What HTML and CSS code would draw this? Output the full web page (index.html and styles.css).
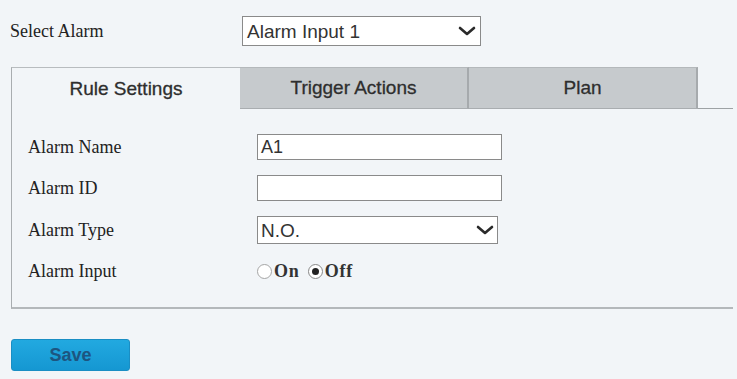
FILE: index.html
```html
<!DOCTYPE html>
<html>
<head>
<meta charset="utf-8">
<link rel="stylesheet" href="styles.css">
</head>
<body>
<div class="page">
  <div class="top-row">
    <span class="label top-label">Select Alarm</span>
    <div class="select select-top">
      <span class="select-text">Alarm Input 1</span>
      <svg class="chev" width="18" height="10" viewBox="0 0 18 10"><path d="M2 2 L9 8 L16 2" fill="none" stroke="#2a2a2a" stroke-width="2.6" stroke-linecap="round" stroke-linejoin="round"/></svg>
    </div>
  </div>

  <div class="panel">
    <div class="tabs">
      <div class="tab active">Rule Settings</div>
      <div class="tab">Trigger Actions</div>
      <div class="tab">Plan</div>
      <div class="tab-fill"></div>
    </div>
    <div class="panel-body">
      <div class="row">
        <span class="label">Alarm Name</span>
        <div class="input">A1</div>
      </div>
      <div class="row">
        <span class="label">Alarm ID</span>
        <div class="input"></div>
      </div>
      <div class="row">
        <span class="label">Alarm Type</span>
        <div class="select select-type">
          <span class="select-text">N.O.</span>
          <svg class="chev" width="18" height="10" viewBox="0 0 18 10"><path d="M2 2 L9 8 L16 2" fill="none" stroke="#2a2a2a" stroke-width="2.6" stroke-linecap="round" stroke-linejoin="round"/></svg>
        </div>
      </div>
      <div class="row">
        <span class="label">Alarm Input</span>
        <div class="radios">
          <span class="radio"></span><span class="radio-label">On</span>
          <span class="radio checked"><span class="dot"></span></span><span class="radio-label">Off</span>
        </div>
      </div>
    </div>
  </div>

  <div class="actions">
    <button class="save">Save</button>
  </div>
</div>
</body>
</html>
```

FILE: styles.css
```css
html, body {
  margin: 0;
  padding: 0;
  background: #f2f5f8;
}
.page {
  width: 737px;
  height: 379px;
  overflow: hidden;
  padding-top: 16px;
  box-sizing: border-box;
}
.label {
  font-family: "Liberation Serif", "Times New Roman", serif;
  font-size: 18px;
  color: #222;
}
.top-row {
  display: flex;
  align-items: center;
  height: 30px;
  padding-left: 10px;
}
.top-label {
  width: 232px;
}
.select {
  display: flex;
  align-items: center;
  justify-content: space-between;
  background: #fff;
  border: 1px solid #8a8a8a;
  box-sizing: border-box;
  font-family: "Liberation Sans", Arial, sans-serif;
  font-size: 19px;
  color: #333;
}
.select-top {
  width: 239px;
  height: 30px;
  padding: 0 4px 0 4px;
}
.select-type {
  width: 241px;
  height: 28px;
  padding: 0 3px 0 3px;
}
.select-text {
  line-height: 1;
}
.chev {
  display: block;
}
.panel {
  margin-left: 11px;
  width: 722px;
  margin-top: 21px;
}
.tabs {
  display: flex;
  height: 42px;
}
.tab {
  width: 229px;
  box-sizing: border-box;
  display: flex;
  align-items: center;
  justify-content: center;
  font-family: "Liberation Sans", Arial, sans-serif;
  font-size: 19px;
  color: #2e2e2e;
  background: #c6cacd;
  border-top: 1px solid #b4b8bb;
  border-right: 2px solid #a6aaad;
  border-bottom: 1px solid #a9adb0;
  -webkit-text-stroke: 0.3px #2e2e2e;
}
.tab.active {
  background: #f2f5f8;
  border-left: 1px solid #a9adb0;
  border-right: none;
  border-bottom: none;
  border-top: 1px solid #b8bcbf;
}
.tab-fill {
  flex: 1;
  border-bottom: 1px solid #9ea2a5;
}
.panel-body {
  height: 200px;
  box-sizing: border-box;
  border-left: 1px solid #a9adb0;
  border-bottom: 2px solid #b4b8bb;
  padding-top: 25px;
  padding-left: 16px;
}
.row {
  display: flex;
  align-items: center;
  height: 26px;
  margin-bottom: 15px;
}
.row .label {
  width: 229px;
  flex-shrink: 0;
}
.input {
  width: 245px;
  height: 26px;
  box-sizing: border-box;
  background: #fff;
  border: 1px solid #8a8a8a;
  font-family: "Liberation Sans", Arial, sans-serif;
  font-size: 18px;
  color: #333;
  padding: 2px 3px;
  line-height: 20px;
}
.row:nth-child(3) {
  height: 28px;
  margin-bottom: 14px;
}
.radios {
  display: flex;
  align-items: center;
  padding-left: 0;
}
.radio {
  flex-shrink: 0;
  width: 15px;
  height: 15px;
  border-radius: 50%;
  border: 1px solid #a5a5a5;
  background: #fff;
  box-sizing: border-box;
  display: flex;
  align-items: center;
  justify-content: center;
}
.radio.checked {
  border-color: #888;
}
.dot {
  width: 7px;
  height: 7px;
  border-radius: 50%;
  background: #222;
}
.radio-label {
  font-family: "Liberation Serif", "Times New Roman", serif;
  font-size: 18px;
  font-weight: bold;
  letter-spacing: 0.8px;
  color: #333;
  margin-left: 2px;
  margin-right: 8px;
}
.actions {
  padding-left: 11px;
  margin-top: 30px;
}
.save {
  width: 119px;
  height: 32px;
  border: 1px solid #1a8ec4;
  border-radius: 3px;
  background: linear-gradient(#22a9e0, #1597d2);
  font-family: "Liberation Sans", Arial, sans-serif;
  font-size: 18px;
  font-weight: bold;
  color: #1d5580;
  padding: 0;
}
```
